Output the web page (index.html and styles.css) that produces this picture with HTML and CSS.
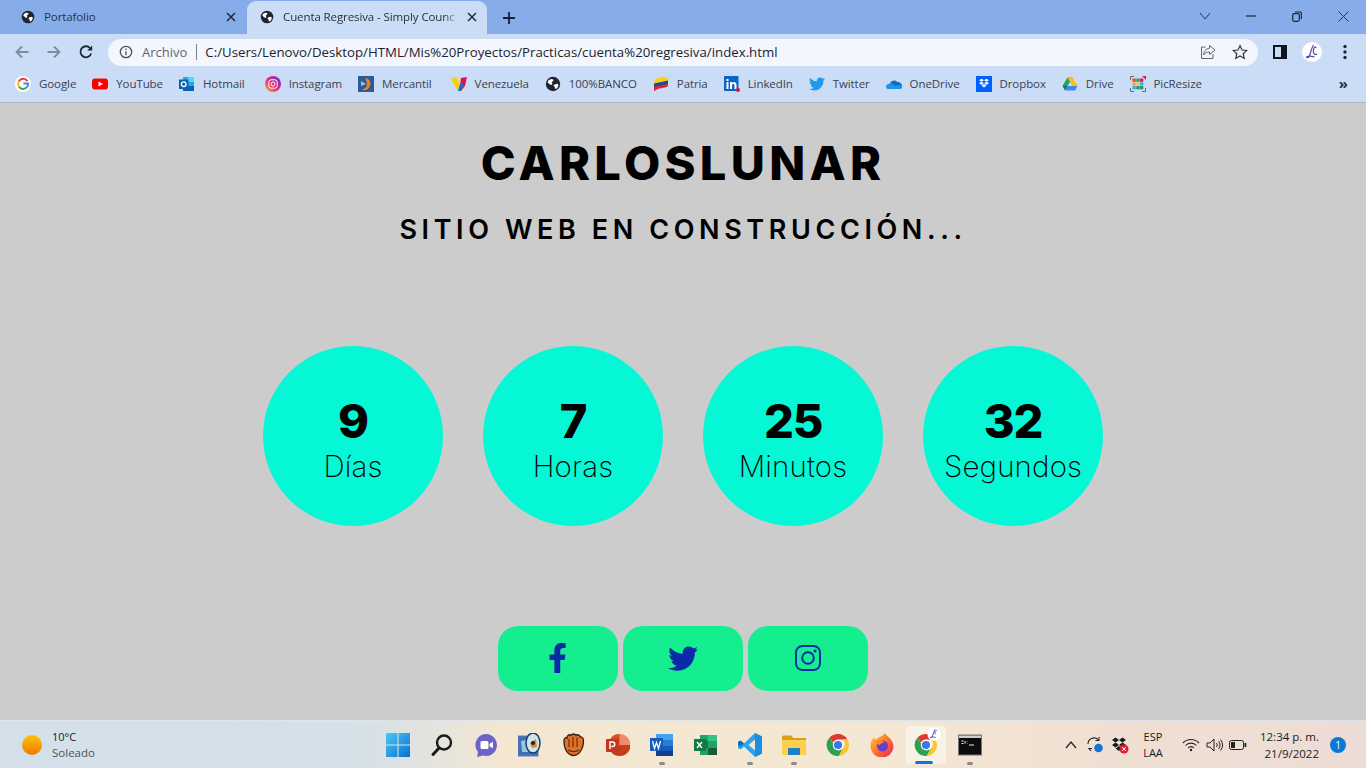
FILE: index.html
```html
<!DOCTYPE html>
<html lang="es">
<head>
<meta charset="utf-8">
<title>Cuenta Regresiva - Simply Countdown</title>
<link rel="stylesheet" href="styles.css">
</head>
<body>
<svg class="defs" aria-hidden="true">
  <defs>
    <symbol id="globe" viewBox="0 0 16 16">
      <circle cx="8" cy="8" r="7.2" fill="#1f2430"/>
      <path d="M3.500 4.200 6 3 8.500 3.400 8.200 5 6.600 6.200 7.400 8 6 9 3.800 7.400 2.600 6.600Z M9.600 8.400l3-.6 1 1.400-1.400 3-1.800.8-.8-2.200-1.200-1.200Z" fill="#fff"/>
    </symbol>
    <symbol id="chrome" viewBox="0 0 24 24">
      <path d="M12 1a11 11 0 0 1 9.5 5.5H12a5.5 5.5 0 0 0-5 3.2L3.6 4.6A11 11 0 0 1 12 1Z" fill="#dd3a2e"/>
      <path d="M21.5 6.5A11 11 0 0 1 12.6 23l4.2-7.6a5.5 5.5 0 0 0 .2-8.9Z" fill="#fbc52c"/>
      <path d="M3.6 4.6 7.9 12a5 5 0 0 0 8.9 3.4L12.6 23A11 11 0 0 1 3.6 4.6Z" fill="#2f9e4f"/>
      <circle cx="12" cy="12" r="5.2" fill="#fff"/>
      <circle cx="12" cy="12" r="4.1" fill="#3b78e7"/>
    </symbol>
  </defs>
</svg>

<header class="chrome">
  <div class="tabstrip">
    <div class="tab">
      <svg class="fav"><use href="#globe"/></svg>
      <span class="tab-title">Portafolio</span>
      <svg class="tab-x" viewBox="0 0 10 10"><path d="M1 1l8 8M9 1 1 9"/></svg>
    </div>
    <div class="tab tab-active">
      <svg class="fav"><use href="#globe"/></svg>
      <span class="tab-title tab-fade">Cuenta Regresiva - Simply Counc</span>
      <svg class="tab-x" viewBox="0 0 10 10"><path d="M1 1l8 8M9 1 1 9"/></svg>
    </div>
    <svg class="newtab" viewBox="0 0 14 14"><path d="M7 1v12M1 7h12"/></svg>
    <div class="win">
      <span class="winbtn"><svg width="12" height="8" viewBox="0 0 12 8"><path d="M1 1l5 6 5-6" class="wl"/></svg></span>
      <span class="winbtn"><svg width="10" height="2" viewBox="0 0 10 2"><path d="M0 1h10" class="wl2"/></svg></span>
      <span class="winbtn"><svg width="10" height="11" viewBox="0 0 10 11"><rect x=".7" y="2.7" width="6.6" height="7.6" rx="1.5" class="wl2"/><path d="M3 1h4.5A1.5 1.5 0 0 1 9.3 2.5V8" class="wl2"/></svg></span>
      <span class="winbtn"><svg width="11" height="11" viewBox="0 0 11 11"><path d="M.5.5l10 10M10.5.5l-10 10" class="wl"/></svg></span>
    </div>
  </div>

  <div class="toolbar">
    <svg class="nav nav-off" viewBox="0 0 16 16"><path d="M14.5 8H2.5M8 2.5 2.5 8 8 13.5"/></svg>
    <svg class="nav nav-off" viewBox="0 0 16 16"><path d="M1.5 8h12M8 2.5 13.5 8 8 13.5"/></svg>
    <svg class="nav nav-on" viewBox="0 0 16 16"><path d="M13.2 9.5A5.5 5.5 0 1 1 12 4"/><path class="solid" d="M14.2 1.6v5h-5Z"/></svg>
    <div class="omni">
      <svg class="info" viewBox="0 0 14 14"><circle cx="7" cy="7" r="5.7"/><path d="M7 6.2v4M7 3.6v1.4"/></svg>
      <span class="archivo">Archivo</span>
      <span class="divider"></span>
      <span class="url">C:/Users/Lenovo/Desktop/HTML/Mis%20Proyectos/Practicas/cuenta%20regresiva/index.html</span>
      <svg class="omni-ic omni-share" viewBox="0 0 16 16"><path d="M5.5 3H1.5v11.5H13V10M9.5 1.5 15 6l-5.5 4.5V8C6.500 8 4.500 9 3.500 11 3.500 7.500 6 4.500 9.500 4.300Z"/></svg>
      <svg class="omni-ic omni-star" viewBox="0 0 16 16"><path d="M8 1.6 10 6l4.700.5-3.500 3.200 1 4.700L8 12l-4.200 2.400 1-4.700L1.300 6.500 6 6Z"/></svg>
    </div>
    <svg class="panel" viewBox="0 0 14 14"><path d="M1 1h12v12H1Z" class="panel-o"/><path d="M8 1h5v12H8Z" class="panel-f"/></svg>
    <svg class="avatar" viewBox="0 0 20 20"><circle cx="10" cy="10" r="10" fill="#fff"/><path d="M11.500 3c-2 3-3 8-4 11-.5 1.500-2.500 2-3 1 2-1 5-1 8 0M14.500 5.500c-2-1.500-3.500 1-3 5 .2 2 2 2.500 3.500 1.500" fill="none" stroke="#4b46a8" stroke-width="1.200"/></svg>
    <svg class="dots" viewBox="0 0 4 16"><circle cx="2" cy="2.500" r="1.700"/><circle cx="2" cy="8" r="1.700"/><circle cx="2" cy="13.500" r="1.700"/></svg>
  </div>

  <nav class="bookmarks">
    <a class="bm bm-google"><svg class="bi" viewBox="0 0 16 16"><circle cx="8" cy="8" r="8" fill="#fff"/><path d="M12.500 5.200A5 5 0 0 0 3.800 5.600" fill="none" stroke="#ea4335" stroke-width="2"/><path d="M3.800 5.600a5 5 0 0 0 .2 5.100" fill="none" stroke="#fbbc05" stroke-width="2"/><path d="M4 10.700a5 5 0 0 0 8 .5" fill="none" stroke="#34a853" stroke-width="2"/><path d="M12 11.200A5 5 0 0 0 13 7.500H8.300" fill="none" stroke="#4285f4" stroke-width="2"/></svg><span>Google</span></a>
    <a class="bm bm-youtube"><svg class="bi" viewBox="0 0 16 16"><rect y="2.500" width="16" height="11" rx="3" fill="#f00"/><path d="M6.500 5.500 11 8l-4.500 2.500Z" fill="#fff"/></svg><span>YouTube</span></a>
    <a class="bm bm-hotmail"><svg class="bi" viewBox="0 0 16 16"><path d="M4 1h11v14H4Z" fill="#28a8ea"/><path d="M9 1h6v5H9Z" fill="#50d9ff"/><path d="M4 10h11v5H4Z" fill="#0364b8"/><rect y="3.500" width="9.500" height="9.500" fill="#0a62b0"/><circle cx="4.700" cy="8.200" r="2.300" fill="none" stroke="#fff" stroke-width="1.300"/></svg><span>Hotmail</span></a>
    <a class="bm bm-instagram"><svg class="bi" viewBox="0 0 16 16"><defs><linearGradient id="ig" x1="0" y1="1" x2="1" y2="0"><stop offset="0" stop-color="#fec10f"/><stop offset=".45" stop-color="#ee2a7b"/><stop offset="1" stop-color="#6228d7"/></linearGradient></defs><circle cx="8" cy="8" r="8" fill="url(#ig)"/><rect x="3.800" y="3.800" width="8.400" height="8.400" rx="2.300" fill="none" stroke="#fff"/><circle cx="8" cy="8" r="2" fill="none" stroke="#fff"/></svg><span>Instagram</span></a>
    <a class="bm bm-mercantil"><svg class="bi" viewBox="0 0 16 16"><rect width="16" height="16" fill="#2c5b97"/><path d="M7 2c6 1 7 6 3 11-2 1.500-4 1.500-6 .5 4-1 7-4 3-11.500Z" fill="#f07f22"/><path d="M3 5 8 8 3 10Z" fill="#9dc0e4"/></svg><span>Mercantil</span></a>
    <a class="bm bm-venezuela"><svg class="bi" viewBox="0 0 16 16"><path d="M0 3 5 1l4 7-2 7Z" fill="#fdd000"/><path d="M10 2l6-1-2 9-4 5-1-6Z" fill="#e3124f"/><path d="M9 8l4 0-3 7-3 0Z" fill="#1d70c0"/></svg><span>Venezuela</span></a>
    <a class="bm bm-banco"><svg class="bi bi-globe"><use href="#globe"/></svg><span>100%BANCO</span></a>
    <a class="bm bm-patria"><svg class="bi" viewBox="0 0 16 16"><path d="M1 6C2 2 8 0 15 1.500L15 5 1 8Z" fill="#fcd116"/><path d="M1 7.500 15 4.500V8.500L1 11.500Z" fill="#2147a8"/><path d="M1 11 15 8V10C12 13 5 11 1 15.500Z" fill="#e3262e"/></svg><span>Patria</span></a>
    <a class="bm bm-linkedin"><svg class="bi" viewBox="0 0 16 16"><rect width="14.500" height="15" fill="#0a66c2"/><path d="M2.500 6h2v7h-2ZM2.500 3h2v2h-2ZM6 6h2v1c1-1.500 4.500-1.500 4.500 2v4h-2V9.500c0-2-2.500-2-2.500 0V13H6Z" fill="#fff"/><circle cx="14" cy="14" r="2" fill="#e2121d"/></svg><span>LinkedIn</span></a>
    <a class="bm bm-twitter"><svg class="bi" viewBox="0 0 512 512"><path fill="#1d9bf0" d="M459.370 151.716c.325 4.548.325 9.097.325 13.645 0 138.720-105.583 298.558-298.558 298.558-59.452 0-114.680-17.219-161.137-47.106 8.447.974 16.568 1.299 25.340 1.299 49.055 0 94.213-16.568 130.274-44.832-46.132-.975-84.792-31.188-98.112-72.772 6.498.974 12.995 1.624 19.818 1.624 9.421 0 18.843-1.300 27.614-3.573-48.081-9.747-84.143-51.980-84.143-102.985v-1.299c13.969 7.797 30.214 12.670 47.431 13.319-28.264-18.843-46.781-51.005-46.781-87.391 0-19.492 5.197-37.360 14.294-52.954 51.655 63.675 129.300 105.258 216.365 109.807-1.624-7.797-2.599-15.918-2.599-24.040 0-57.828 46.782-104.934 104.934-104.934 30.213 0 57.502 12.670 76.670 33.137 23.715-4.548 46.456-13.645 66.599-25.340-7.798 24.366-24.366 44.833-46.132 57.827 21.117-2.273 41.584-8.122 60.426-16.243-14.292 20.791-32.161 39.308-52.628 54.253z"/></svg><span>Twitter</span></a>
    <a class="bm bm-onedrive"><svg class="bi" viewBox="0 0 16 16"><path d="M4 8c.5-3.500 5-5 7.500-2 2-.5 4.500 1.500 4.500 4l-9 1Z" fill="#0f6cbd"/><path d="M0 11c0-2 1.500-3.500 4-3.200 2-.5 3.500 0 5 2 2-1.500 6-1 7 .5.300 1.500-.5 2.700-2 2.700H2c-1.200 0-2-1-2-2Z" fill="#1f93e8"/></svg><span>OneDrive</span></a>
    <a class="bm bm-dropbox"><svg class="bi" viewBox="0 0 16 16"><rect width="16" height="16" fill="#0061fe"/><path d="M3 4.200 5.500 2.700 8 4.200 5.500 5.700ZM8 4.200l2.500-1.500L13 4.200l-2.500 1.500ZM3 7.200l2.500-1.500L8 7.200 5.500 8.700ZM8 7.200l2.500-1.500L13 7.200l-2.500 1.500ZM5.500 9.500 8 8l2.500 1.500L8 11.500Z" fill="#fff"/></svg><span>Dropbox</span></a>
    <a class="bm bm-drive"><svg class="bi" viewBox="0 0 16 16"><path d="M5.500 1.500h5L5.500 10H.5Z" fill="#1fa463"/><path d="M10.500 1.500 15.500 10H10.500L5.500 1.500Z" fill="#ffc107"/><path d="M3 14.500 5.500 10h10L13 14.500Z" fill="#4285f4"/><path d="M.5 10h5L3 14.500Z" fill="#0b8043"/></svg><span>Drive</span></a>
    <a class="bm bm-pic"><svg class="bi" viewBox="0 0 16 16"><path d="M.5 4V.5H4M.5 12v3.500H4M12 15.500h3.500V12" fill="none" stroke="#667" /><rect x="2.500" y="2.500" width="3.300" height="3.300" fill="#e34d2c"/><rect x="6.300" y="2.500" width="3.300" height="3.300" fill="#2a9d58"/><rect x="10" y="2.500" width="3.300" height="3.300" fill="#d21f6b"/><rect x="2.500" y="6.300" width="3.300" height="3.300" fill="#f5a623"/><rect x="6.300" y="6.300" width="3.300" height="3.300" fill="#f6c244"/><rect x="10" y="6.300" width="3.300" height="3.300" fill="#3fa9d8"/><rect x="2.500" y="10" width="3.300" height="3.300" fill="#3fa9d8"/><rect x="6.300" y="10" width="3.300" height="3.300" fill="#1f8a9e"/><rect x="10" y="10" width="3.300" height="3.300" fill="#2a9d58"/><path d="M12 0h4v4Z" fill="#e5106a"/></svg><span>PicResize</span></a>
    <span class="more">»</span>
  </nav>
</header>

<main class="page">
  <h1 class="title">CARLOSLUNAR</h1>
  <h2 class="subtitle">SITIO WEB EN CONSTRUCCIÓN...</h2>
  <section class="countdown">
    <div class="circle"><strong>9</strong><span>Días</span></div>
    <div class="circle"><strong>7</strong><span>Horas</span></div>
    <div class="circle"><strong>25</strong><span>Minutos</span></div>
    <div class="circle"><strong>32</strong><span>Segundos</span></div>
  </section>
  <section class="social">
    <a class="sbtn"><svg class="s-fb" viewBox="22 0 272 512"><path d="M279.140 288l14.220-92.660h-88.910v-60.130c0-25.350 12.420-50.060 52.240-50.060h40.420V6.260S260.430 0 225.360 0c-73.220 0-121.080 44.380-121.080 124.720v70.620H22.890V288h81.390v224h100.170V288z"/></svg></a>
    <a class="sbtn"><svg class="s-tw" viewBox="0 40 512 430"><path d="M459.37 151.716c.325 4.548.325 9.097.325 13.645 0 138.720-105.583 298.558-298.558 298.558-59.452 0-114.680-17.219-161.137-47.106 8.447.974 16.568 1.299 25.340 1.299 49.055 0 94.213-16.568 130.274-44.832-46.132-.975-84.792-31.188-98.112-72.772 6.498.974 12.995 1.624 19.818 1.624 9.421 0 18.843-1.300 27.614-3.573-48.081-9.747-84.143-51.980-84.143-102.985v-1.299c13.969 7.797 30.214 12.670 47.431 13.319-28.264-18.843-46.781-51.005-46.781-87.391 0-19.492 5.197-37.360 14.294-52.954 51.655 63.675 129.300 105.258 216.365 109.807-1.624-7.797-2.599-15.918-2.599-24.040 0-57.828 46.782-104.934 104.934-104.934 30.213 0 57.502 12.670 76.670 33.137 23.715-4.548 46.456-13.645 66.599-25.340-7.798 24.366-24.366 44.833-46.132 57.827 21.117-2.273 41.584-8.122 60.426-16.243-14.292 20.791-32.161 39.308-52.628 54.253z"/></svg></a>
    <a class="sbtn"><svg class="s-ig" viewBox="0 0 26 26"><rect x="1" y="1" width="24" height="24" rx="6.500"/><circle cx="13" cy="13" r="5.800"/><circle class="s-dot" cx="20" cy="6" r="1.500"/></svg></a>
  </section>
</main>

<footer class="taskbar">
  <div class="weather">
    <span class="sun"></span>
    <div class="weather-text"><span class="temp">10°C</span><span class="sky">Soleado</span></div>
  </div>
  <div class="apps">
    <span class="app"><svg class="ai" viewBox="0 0 24 24"><defs><linearGradient id="w11" x1="0" y1="0" x2="1" y2="1"><stop offset="0" stop-color="#4cc9f5"/><stop offset="1" stop-color="#0a70d0"/></linearGradient></defs><path d="M0 0h11.500v11.500H0ZM12.500 0H24v11.500H12.500ZM0 12.500h11.500V24H0ZM12.500 12.500H24V24H12.500Z" fill="url(#w11)"/></svg></span>
    <span class="app"><svg class="ai" viewBox="0 0 24 24"><circle cx="14" cy="9.500" r="7" fill="none" stroke="#1a1a1a" stroke-width="2.400"/><path d="M9 15 3 21.500" stroke="#1a1a1a" stroke-width="3" stroke-linecap="round"/></svg></span>
    <span class="app"><svg class="ai" viewBox="0 0 24 24"><path d="M12 1a11 11 0 1 1-3 21.600L3 24l1-5A11 11 0 0 1 12 1Z" fill="#6d62c9"/><rect x="6.500" y="8" width="8" height="8" rx="1.500" fill="#fff"/><path d="M15.500 11 19 8.500v7L15.500 13Z" fill="#fff"/></svg></span>
    <span class="app"><svg class="ai" viewBox="0 0 24 24"><rect x="0" y="3" width="20" height="20" fill="#3c6fb5" stroke="#6a79b8"/><path d="M3 8 12 6 11 19 4 19Z" fill="#97c7da"/><ellipse cx="15" cy="10" rx="7" ry="10" fill="#d1e4ea" stroke="#143d70" stroke-width="1.500"/><path d="M12 10 18 6 19 14 14 15Z" fill="#d88a2a"/><circle cx="15" cy="10" r="2" fill="#222"/></svg></span>
    <span class="app"><svg class="ai" viewBox="0 0 24 24"><path d="M2 8c0-3 1.500-4 3-3 0-3 2.500-4 4-2.500 1-2 4-2 5 0 1.500-1.500 4-.5 4 1.500 2-.5 3.500 1 3.500 3.500 0 9-5 15-10 15S2 17 2 8Z" fill="#e0702a" stroke="#3a1d0a" stroke-width="1.300"/><path d="M7 6v8M11 4v10M15 4.500v9.500M6 17c3 2 8 2 11 0" fill="none" stroke="#5e2b0c" stroke-width="1.100"/></svg></span>
    <span class="app"><svg class="ai" viewBox="0 0 24 24"><circle cx="13.500" cy="12" r="11" fill="#f08a6a"/><path d="M13.500 1a11 11 0 0 0-11 11h11Z" fill="#dc4a26"/><path d="M13.500 12h11a11 11 0 0 1-11 11 11 11 0 0 1-8-3.500Z" fill="#c43e1c"/><rect x="0" y="6" width="13" height="13" rx="1" fill="#c5361a"/><path d="M4 16V9h2.500a2.200 2.200 0 0 1 0 4.500H5.400" fill="none" stroke="#fff" stroke-width="1.500"/></svg></span>
    <span class="app app-run"><svg class="ai" viewBox="0 0 24 24"><path d="M6 1h17v22H6Z" fill="#2b7cd3"/><path d="M6 1h17v6H6Z" fill="#41a5ee"/><path d="M6 13h17v5H6Z" fill="#185abd"/><path d="M6 18h17v5H6Z" fill="#103f91"/><rect x="0" y="5" width="13" height="13" fill="#185abd"/><path d="M2.500 8 4.500 15.500 6.500 9.500 8.500 15.500 10.500 8" fill="none" stroke="#fff" stroke-width="1.300"/></svg></span>
    <span class="app"><svg class="ai" viewBox="0 0 24 24"><path d="M6 2h17v20H6Z" fill="#21a366"/><path d="M14 2h9v6h-9Z" fill="#33c481"/><path d="M6 8h8v7H6Z" fill="#107c41"/><path d="M14 15h9v7h-9Z" fill="#185c37"/><rect x="0" y="6" width="12" height="12" fill="#0f7a40"/><path d="M3 9l5 6M8 9l-5 6" stroke="#fff" stroke-width="1.400"/></svg></span>
    <span class="app app-run"><svg class="ai" viewBox="0 0 24 24"><path d="M17 0 24 3.500V20.500L17 24 6 13.500 2.500 16.500 0 15V9L2.500 7.500 6 10.500Z" fill="#2aa2ec"/><path d="M17 6.500 10.500 12 17 17.500Z" fill="#f3e6d0"/><path d="M17 0 24 3.500V20.500L17 24Z" fill="#1a8ee0"/><path d="M2.500 7.500 6 10.500 2.500 13.500 0 12V9Z" fill="#0d6fb8"/></svg></span>
    <span class="app app-run"><svg class="ai" viewBox="0 0 24 24"><path d="M0 4a1.500 1.500 0 0 1 1.500-1.500H9L11.500 5H24v17H0Z" fill="#d8a018"/><path d="M0 7h24v15H0Z" fill="#fbcf4f"/><path d="M7 15h10a1 1 0 0 1 1 1v6H6v-6a1 1 0 0 1 1-1Z" fill="#1f7fc4"/></svg></span>
    <span class="app"><svg class="ai"><use href="#chrome"/></svg></span>
    <span class="app"><svg class="ai" viewBox="0 0 24 24"><defs><linearGradient id="ff" x1="0" y1="0" x2="1" y2="1"><stop offset="0" stop-color="#ffd23a"/><stop offset=".55" stop-color="#ff6a2a"/><stop offset="1" stop-color="#e8206a"/></linearGradient></defs><path d="M15 0c1 3 8 6 8.500 13A11.500 11.500 0 0 1 .5 13C.5 9 2 6 4 4.500L5.500 7C7 4.500 12 4 15 0Z" fill="url(#ff)"/><circle cx="12.500" cy="13" r="5.500" fill="#6a3fc8"/><path d="M5 8c3-2 8-1 9 2-3-.5-4 1-4 2-2-.5-4-2-5-4Z" fill="#ff8a2a"/></svg></span>
    <span class="app app-active"><svg class="ai"><use href="#chrome"/></svg><svg class="mini" viewBox="0 0 20 20"><circle cx="10" cy="10" r="9.500" fill="#fff"/><path d="M11.500 3c-2 3-3 8-4 11-.5 1.500-2.500 2-3 1 2-1 5-1 8 0M14.500 5.500c-2-1.500-3.500 1-3 5" fill="none" stroke="#4b46a8" stroke-width="1.300"/></svg></span>
    <span class="app app-run"><svg class="ai" viewBox="0 0 24 24"><rect x=".5" y="2" width="23" height="20" fill="#0c0c0c" stroke="#777"/><rect x="1" y="2.500" width="22" height="2.500" fill="#cfcfcf"/><path d="M3.500 8h2M3.500 10.500h2M7 8v2.500M9 8v.5M9 10v.5M11 12h5" stroke="#eee" stroke-width="1"/></svg></span>
  </div>
  <div class="tray">
    <svg class="caret" viewBox="0 0 12 8"><path d="M1 7l5-6 5 6"/></svg>
    <svg class="ti ti-sync" viewBox="0 0 18 18"><path d="M2 8a6 6 0 0 1 10-4.500M13 1v3.500H9.500M5 15l-2-2.500H6" fill="none" stroke="#222" stroke-width="1.100"/><circle cx="12.500" cy="12" r="4.300" fill="#0f78d4"/></svg>
    <svg class="ti ti-drop" viewBox="0 0 18 18"><path d="M1 4l3.500-2.500L8 4 4.500 6.500ZM8 4l3.500-2.500L15 4l-3.500 2.500ZM1 9l3.500-2.500L8 9l-3.500 2.500ZM8 9l3.500-2.500L15 9l-3.500 2.500ZM4.500 12.500 8 10l3.500 2.500L8 15Z" fill="#1a1a1a"/><circle cx="13" cy="13" r="4.500" fill="#e21b2c"/><path d="M11 11l4 4M15 11l-4 4" stroke="#fff"/></svg>
    <div class="lang"><span>ESP</span><span>LAA</span></div>
    <svg class="ti ti-wifi" viewBox="0 0 18 14"><path d="M1 5a11 11 0 0 1 16 0M3.500 7.500a7.500 7.500 0 0 1 11 0M6 10a4 4 0 0 1 6 0" fill="none" stroke="#222" stroke-width="1.100"/><circle cx="9" cy="12" r="1.200" fill="#222"/></svg>
    <svg class="ti ti-vol" viewBox="0 0 18 14"><path d="M1 5h3l4-4v12L4 9H1ZM10.500 5a3 3 0 0 1 0 4M12.500 3a6 6 0 0 1 0 8M14.500 1.500a9 9 0 0 1 0 11" fill="none" stroke="#222"/></svg>
    <svg class="ti ti-bat" viewBox="0 0 18 12"><rect x=".5" y="1.500" width="14" height="9" rx="2" fill="none" stroke="#222"/><rect x="2" y="3" width="4" height="6" fill="#222"/><rect x="15.500" y="4" width="1.800" height="4" fill="#222"/></svg>
    <div class="clock"><span>12:34 p. m.</span><span>21/9/2022</span></div>
    <span class="badge">1</span>
  </div>
</footer>
</body>
</html>
```

FILE: styles.css
```css
* { box-sizing: border-box; }
html, body { margin: 0; padding: 0; }
body {
  width: 1366px;
  height: 768px;
  overflow: hidden;
  display: flex;
  flex-direction: column;
  background: #ccc;
  font-family: "Open Sans", "Liberation Sans", sans-serif;
}
.defs { position: absolute; width: 0; height: 0; }

/* Browser chrome */
.chrome { flex: none; background: #cadcf6; border-bottom: 1px solid #a9b4c4; height: 103px; }
.tabstrip { height: 34px; background: #87acea; display: flex; align-items: flex-end; position: relative; }
.tab { width: 247px; height: 33px; padding: 0 10px 2px 21px; display: flex; align-items: center; color: #2a3346; }
.tab-active { background: #cadcf6; border-radius: 9px 9px 0 0; padding: 0 9px 2px 13px; width: 240px; color: #2a2f3a; }
.fav { width: 14px; height: 14px; flex: none; }
.tab-title { font-size: 11.5px; margin-left: 9px; flex: 1; white-space: nowrap; letter-spacing: -.1px; }
.tab-fade { -webkit-mask-image: linear-gradient(90deg, #000 90%, transparent 100%); mask-image: linear-gradient(90deg, #000 90%, transparent 100%); flex: none; width: 178px; }
.tab-x { width: 10px; height: 10px; flex: none; fill: none; stroke: #222a38; stroke-width: 1.500; margin-left: auto; margin-right: 1px; }
.newtab { width: 14px; height: 14px; margin-left: 15px; margin-bottom: 9px; fill: none; stroke: #1a2030; stroke-width: 1.800; flex: none; }
.win { margin-left: auto; display: flex; align-items: center; height: 32px; margin-bottom: 2px; }
.winbtn { width: 46px; display: flex; justify-content: center; align-items: center; }
.wl { fill: none; stroke: #2b3448; stroke-width: 1; }
.wl2 { fill: none; stroke: #1e2534; stroke-width: 1.200; }

.toolbar { height: 34px; display: flex; align-items: center; padding: 2px 0 0 14px; }
.nav { width: 16px; height: 16px; fill: none; stroke-width: 1.800; flex: none; margin-right: 16px; }
.nav-off { stroke: #7f8a9b; }
.nav-on { stroke: #20262f; margin-right: 14px; }
.solid { fill: #20262f; stroke: none; }
.omni { width: 1150px; height: 27px; background: #f3f7fd; border-radius: 14px; display: flex; align-items: center; padding: 0 10px 0 11px; flex: none; }
.info { width: 14px; height: 14px; fill: none; stroke: #4a505c; stroke-width: 1.300; flex: none; }
.archivo { font-size: 13px; color: #5f6670; margin-left: 9px; }
.divider { width: 1px; height: 16px; background: #7a8088; margin: 0 8px 0 9px; }
.url { font-size: 13.250px; color: #1d2230; white-space: nowrap; }
.omni-ic { width: 16px; height: 16px; fill: none; flex: none; }
.omni-share { margin-left: auto; stroke: #5c6472; stroke-width: 1; }
.omni-star { margin-left: 16px; stroke: #2f3540; stroke-width: 1.200; margin-right: 0; }
.panel { width: 14px; height: 14px; margin-left: 15px; flex: none; }
.panel-o { fill: none; stroke: #10141c; stroke-width: 2; }
.panel-f { fill: #10141c; }
.avatar { width: 20px; height: 20px; margin-left: 15px; flex: none; }
.dots { width: 4px; height: 16px; margin-left: 21px; fill: #20262f; flex: none; }

.bookmarks { height: 34px; display: flex; align-items: center; padding: 0 0 3px 15px; gap: 16px; position: relative; }
.bm { display: flex; align-items: center; gap: 8px; font-size: 11.500px; color: #3a4150; white-space: nowrap; letter-spacing: -.09px; }
.bm span { position: relative; top: -.5px; }
.bm-hotmail { margin-right: 4px; }
.bm-venezuela { margin-left: 3px; }
.bi { width: 16px; height: 16px; flex: none; }
.bi-globe { width: 16px; height: 16px; }
.more { margin-left: auto; margin-right: 18px; font-size: 15px; font-weight: 700; color: #2a3140; line-height: 1; }

/* Page */
.page { flex: 1; display: flex; flex-direction: column; align-items: center; color: #000; font-family: Inter, "Liberation Sans", sans-serif; }
.title { margin: 31px 0 0; font-size: 47px; line-height: 58px; font-weight: 800; letter-spacing: 4.300px; }
.subtitle { margin: 20px 0 0; font-size: 27px; line-height: 36px; font-weight: 600; letter-spacing: 4.600px; }
.countdown { display: flex; gap: 40px; margin-top: 98px; }
.circle { width: 180px; height: 180px; border-radius: 50%; background: #05f7d6; display: flex; flex-direction: column; align-items: center; justify-content: center; padding-bottom: 6px; }
.circle strong { font-size: 47px; line-height: 58px; font-weight: 800; margin-top: 8px; letter-spacing: -1.200px; }
.circle span { font-size: 29.500px; line-height: 34px; font-weight: 250; margin-top: -1px; letter-spacing: .15px; }
.social { display: flex; gap: 5px; margin-top: 100px; }
.sbtn { width: 120px; height: 65px; border-radius: 20px; background: #14ee8f; display: flex; align-items: center; justify-content: center; }
.s-fb { width: 17px; height: 30px; fill: #0a2aa8; margin: -2px 2px 0 0; }
.s-tw { width: 30px; height: 25px; fill: #0a2aa8; margin-top: -1px; }
.s-ig { width: 26px; height: 26px; fill: none; stroke: #0a2aa8; stroke-width: 2; margin-top: -1px; }
.s-dot { fill: #0a2aa8; stroke: none; }

/* Taskbar */
.taskbar { flex: none; height: 48px; display: flex; align-items: center; position: relative; background: linear-gradient(90deg, #d3e0ea 0, #d6e1e8 27%, #f4e7d2 37%, #f4e7d3 65%, #f0e0d2 80%, #ecdcd6 100%); color: #1c1c1c; font-size: 11px; border-top: 1px solid #dfe5ea; }
.weather { display: flex; align-items: center; width: 376px; padding-left: 22px; flex: none; }
.sun { width: 20px; height: 20px; border-radius: 50%; background: linear-gradient(180deg, #fcc400, #ee7a06); flex: none; }
.weather-text { display: flex; flex-direction: column; margin-left: 10px; line-height: 16px; }
.temp { color: #1c1c1c; }
.sky { color: #4f5558; font-size: 11.500px; }
.apps { display: flex; width: 616px; flex: none; }
.app { width: 44px; height: 38px; display: flex; align-items: center; justify-content: center; position: relative; }
.ai { width: 24px; height: 24px; }
.app-run::after { content: ""; position: absolute; left: 19px; bottom: -1px; width: 6px; height: 3px; border-radius: 2px; background: #8a8a8a; }
.app-active { background: rgba(255,255,255,.45); border-radius: 4px; width: 40px; margin: 0 2px; }
.app-active::after { content: ""; position: absolute; left: 9px; bottom: 0; width: 18px; height: 3px; border-radius: 2px; background: #0a78d4; }
.mini { position: absolute; top: 1px; right: 5px; width: 14px; height: 14px; }
.tray { display: flex; align-items: center; flex: none; padding-left: 73px; }
.caret { width: 12px; height: 8px; fill: none; stroke: #222; stroke-width: 1.200; flex: none; }
.ti { flex: none; }
.ti-sync { width: 18px; height: 18px; margin-left: 9px; }
.ti-drop { width: 18px; height: 18px; margin-left: 7px; }
.lang { display: flex; flex-direction: column; align-items: center; line-height: 16px; width: 30px; margin-left: 9px; }
.ti-wifi { width: 18px; height: 14px; margin-left: 14px; }
.ti-vol { width: 18px; height: 14px; margin-left: 6px; }
.ti-bat { width: 18px; height: 12px; margin-left: 5px; }
.clock { display: flex; flex-direction: column; align-items: flex-end; line-height: 17px; width: 60px; margin-left: 12px; font-size: 11.500px; }
.badge { width: 16px; height: 16px; border-radius: 50%; background: #0a78d4; color: #fff; font-size: 10px; display: flex; align-items: center; justify-content: center; margin-left: 11px; flex: none; }
```
